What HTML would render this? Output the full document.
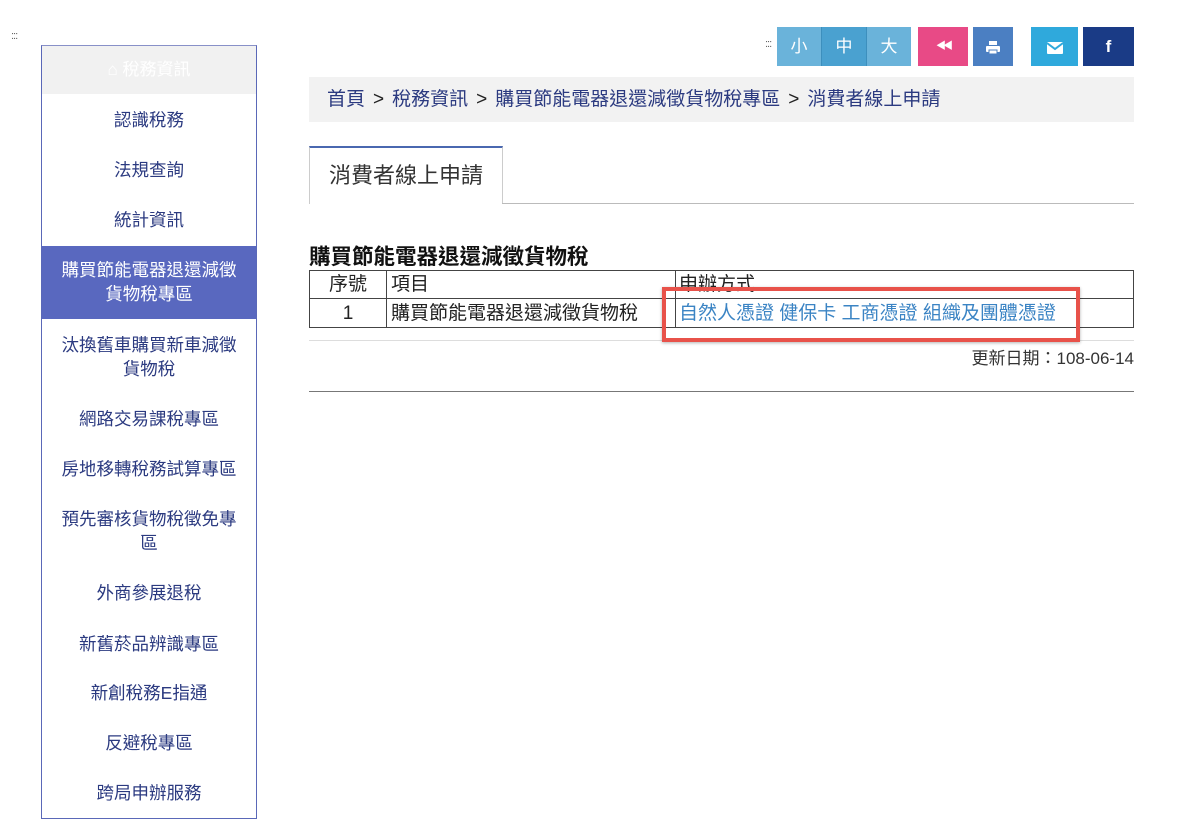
<!DOCTYPE html>
<html><head><meta charset="utf-8"><style>
*{margin:0;padding:0;box-sizing:border-box}
body{width:1200px;height:831px;background:#fff;font-family:"Liberation Sans","Noto Sans CJK TC",sans-serif;position:relative;overflow:hidden;color:#222}
.a{position:absolute}
.side{left:41px;top:45px;width:216px;height:774px;border:1px solid #5a68b8;border-top-color:#8890c8}
.side .hd{height:48px;background:#f1f1f1;color:#fff;text-align:center;line-height:48px;font-size:17px}
.it{position:absolute;left:0;width:214px;text-align:center;font-size:17.5px;color:#2b3a80;line-height:24px}
.btn{position:absolute;top:27px;height:39px;color:#fff;font-size:17px;text-align:center;line-height:39px}
.g{color:#222;margin:0 8px}
</style></head><body>
<div class="a" style="left:11px;top:30px;font-size:11px;color:#666;letter-spacing:-1px">:::</div>
<div class="a side">
<div class="hd">&#8962; 稅務資訊</div>
<div class="it" style="top:62px">認識稅務</div>
<div class="it" style="top:112px">法規查詢</div>
<div class="it" style="top:162px">統計資訊</div>
<div class="it" style="top:200px;height:73px;background:#5968bf;color:#fff;padding-top:12px">購買節能電器退還減徵<br>貨物稅專區</div>
<div class="it" style="top:287px">汰換舊車購買新車減徵<br>貨物稅</div>
<div class="it" style="top:361px">網路交易課稅專區</div>
<div class="it" style="top:411px">房地移轉稅務試算專區</div>
<div class="it" style="top:461px">預先審核貨物稅徵免專<br>區</div>
<div class="it" style="top:535px">外商參展退稅</div>
<div class="it" style="top:586px">新舊菸品辨識專區</div>
<div class="it" style="top:635px">新創稅務E指通</div>
<div class="it" style="top:685px">反避稅專區</div>
<div class="it" style="top:735px">跨局申辦服務</div>
</div>
<div class="a" style="left:765px;top:38px;font-size:11px;color:#666;letter-spacing:-1px">:::</div>
<div class="btn" style="left:777px;width:44px;background:#6ab3da">小</div>
<div class="btn" style="left:821px;width:46px;background:#4aa1d0;border-left:1px solid #3d8fbd;border-right:1px solid #3d8fbd">中</div>
<div class="btn" style="left:867px;width:44px;background:#6ab3da">大</div>
<div class="btn" style="left:918px;width:50px;background:#e84a86;font-size:10px;letter-spacing:-3px">&#9664;&#9664;</div>
<div class="btn" style="left:973px;width:40px;background:#4b7fc2"><svg width="16" height="14" viewBox="0 0 16 14" style="vertical-align:middle"><rect x="4" y="0" width="8" height="4" fill="#fff"/><rect x="1" y="5" width="14" height="6" rx="1" fill="#fff"/><rect x="4" y="9" width="8" height="4" fill="#fff" stroke="#4b7fc2"/></svg></div>
<div class="btn" style="left:1031px;width:47px;background:#2fa9dc"><svg width="16" height="12" viewBox="0 0 16 12" style="vertical-align:middle"><rect width="16" height="12" rx="1" fill="#fff"/><path d="M0 1 L8 7 L16 1" stroke="#2fa9dc" stroke-width="2" fill="none"/></svg></div>
<div class="btn" style="left:1083px;width:51px;background:#1a3b86;font-weight:bold">f</div>
<div class="a" style="left:309px;top:77px;width:825px;height:45px;background:#f2f2f2;font-size:19px;line-height:45px;padding-left:18px;color:#2b3a80;white-space:nowrap">首頁<span class="g">&gt;</span>稅務資訊<span class="g">&gt;</span>購買節能電器退還減徵貨物稅專區<span class="g">&gt;</span>消費者線上申請</div>
<div class="a" style="left:309px;top:146px;width:194px;height:58px;border:1px solid #ccc;border-top:2px solid #4a68b0;border-bottom:none;background:#fff;font-size:22px;line-height:56px;text-align:center;color:#333">消費者線上申請</div>
<div class="a" style="left:502px;top:203px;width:632px;height:1px;background:#bbb"></div>
<div class="a" style="left:309px;top:240px;font-size:21.5px;font-weight:bold;color:#111;white-space:nowrap">購買節能電器退還減徵貨物稅</div>
<table class="a" style="left:309px;top:270px;width:825px;border-collapse:collapse;font-size:19px;color:#222;white-space:nowrap">
<tr style="height:28px;line-height:26px"><td style="border:1px solid #444;width:77px;text-align:center">序號</td><td style="border:1px solid #444;width:289px;padding-left:4px">項目</td><td style="border:1px solid #444;padding-left:3px">申辦方式</td></tr>
<tr style="height:29px;line-height:27px"><td style="border:1px solid #444;text-align:center">1</td><td style="border:1px solid #444;padding-left:4px">購買節能電器退還減徵貨物稅</td><td style="border:1px solid #444;padding-left:3px;color:#3b84c4">自然人憑證 健保卡 工商憑證 組織及團體憑證</td></tr>
</table>
<div class="a" style="left:309px;top:340px;width:825px;height:1px;background:#ddd"></div>
<div class="a" style="left:662px;top:287px;width:418px;height:55px;border:4px solid #e8524a;box-shadow:0 1px 3px rgba(0,0,0,.3)"></div>
<div class="a" style="right:66px;top:344px;font-size:17px;color:#333">更新日期：108-06-14</div>
<div class="a" style="left:309px;top:391px;width:825px;height:1px;background:#777"></div>
</body></html>
